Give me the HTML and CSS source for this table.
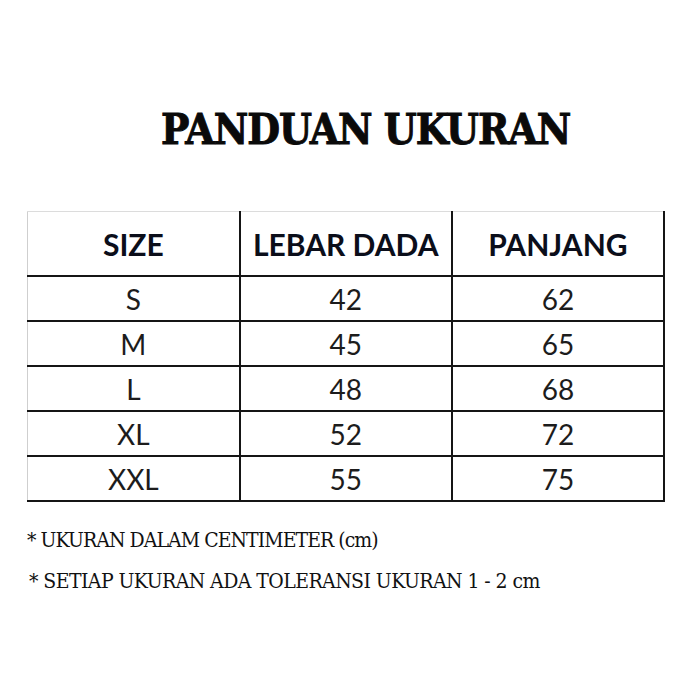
FILE: index.html
```html
<!DOCTYPE html>
<html>
<head>
<meta charset="utf-8">
<link rel="stylesheet" href="styles.css">
</head>
<body>
<div class="page">
  <h1 class="title">PANDUAN UKURAN</h1>
  <table class="size-table">
    <thead>
      <tr><th>SIZE</th><th>LEBAR DADA</th><th>PANJANG</th></tr>
    </thead>
    <tbody>
      <tr><td>S</td><td>42</td><td>62</td></tr>
      <tr><td>M</td><td>45</td><td>65</td></tr>
      <tr><td>L</td><td>48</td><td>68</td></tr>
      <tr><td>XL</td><td>52</td><td>72</td></tr>
      <tr><td>XXL</td><td>55</td><td>75</td></tr>
    </tbody>
  </table>
  <div class="notes">
    <p class="note note-1">* UKURAN DALAM CENTIMETER (cm)</p>
    <p class="note note-2">* SETIAP UKURAN ADA TOLERANSI UKURAN 1 - 2 cm</p>
  </div>
</div>
</body>
</html>
```
FILE: styles.css
```css
html, body {
  margin: 0;
  padding: 0;
  background: #ffffff;
}
.page {
  width: 700px;
  height: 700px;
  padding: 104px 0 0 27px;
  box-sizing: border-box;
  display: flex;
  flex-direction: column;
  align-items: flex-start;
}
.title {
  margin: 0 0 0 134px;
  font-family: "DejaVu Serif", serif;
  font-stretch: condensed;
  font-weight: bold;
  font-size: 42px;
  line-height: 52px;
  color: #0a0a0a;
  letter-spacing: -1px;
  -webkit-text-stroke: 0.9px #0a0a0a;
}
.size-table {
  margin-top: 55px;
  border-collapse: collapse;
  width: 638px;
  table-layout: fixed;
  font-family: Lato, sans-serif;
}
.size-table th,
.size-table td {
  text-align: center;
  padding: 0;
  border: 2px solid #151515;
}
.size-table th {
  height: 63px;
  font-weight: bold;
  font-size: 30px;
  color: #0b0e1a;
  border-top: 1px solid #dcdcdc;
}
.size-table td {
  height: 43px;
  font-size: 28px;
  color: #1c1c1c;
}
.size-table th:first-child,
.size-table td:first-child {
  border-left: 1px solid #cfcfcf;
}
.notes {
  margin-top: 26px;
  display: flex;
  flex-direction: column;
  gap: 17px;
}
.note {
  margin: 0;
  font-family: "DejaVu Serif", serif;
  font-stretch: condensed;
  font-size: 21px;
  line-height: 24px;
  color: #111111;
}
.note-1 {
  letter-spacing: -0.95px;
}
.note-2 {
  letter-spacing: -0.57px;
  padding-left: 2px;
}
```
